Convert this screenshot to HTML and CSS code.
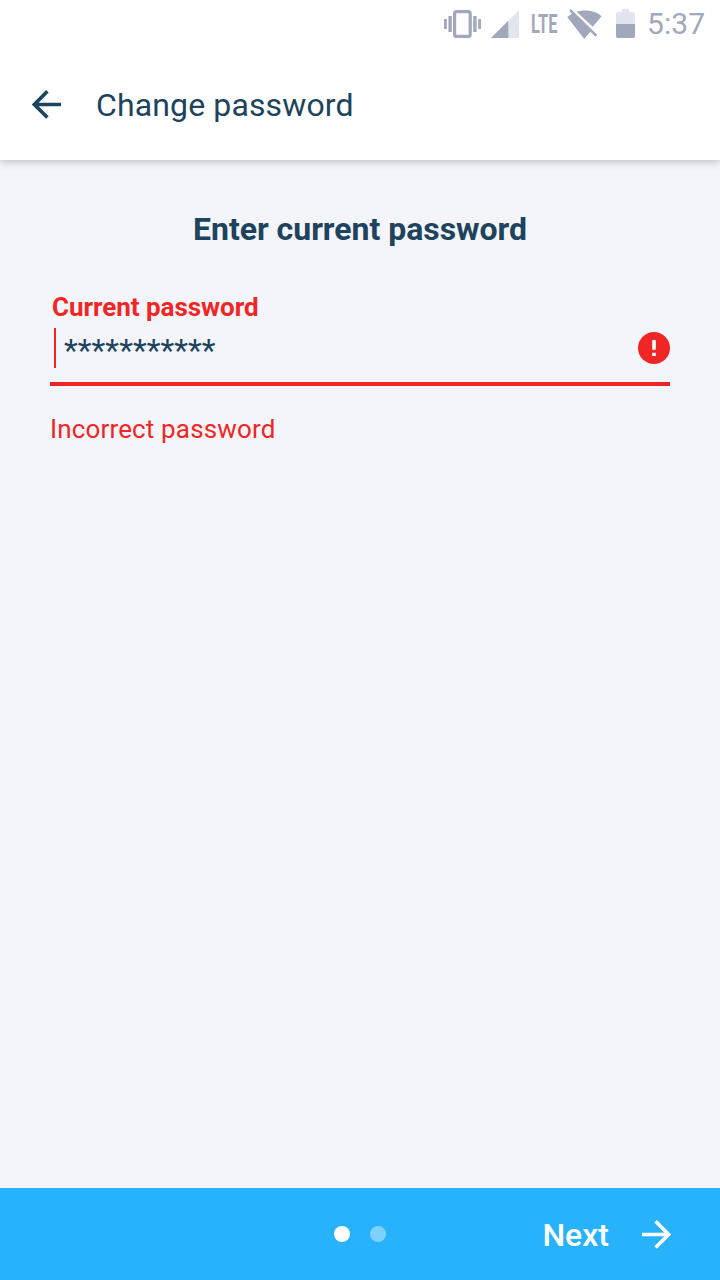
FILE: index.html
```html
<!DOCTYPE html>
<html lang="en">
<head>
<meta charset="utf-8">
<title>Change password</title>
<link rel="stylesheet" href="styles.css">
</head>
<body>
<div class="screen">
  <header class="header">
    <div class="status-bar">
      <svg class="vibrate" width="37" height="28" viewBox="0 0 37 28" fill="currentColor"><path d="M0 9h2.8v10H0zM4.4 6h3.4v16H4.4zM29.2 6h3.4v16h-3.4zM34.2 9H37v10h-2.8z"/><rect x="10.6" y="1.6" width="15.6" height="24.8" rx="2" fill="none" stroke="currentColor" stroke-width="3.2"/></svg>
      <svg class="signal" width="28" height="28" viewBox="0 0 28 28"><path class="faded" d="M28 0v28H0z"/><path fill="currentColor" d="M17.3 10.7V28H0z"/></svg>
      <span class="lte">LTE</span>
      <svg class="wifi" width="35" height="30" viewBox="0 0 35 30" fill="currentColor"><path d="M9.5 2.8C14 1.2 26.5-.2 34.5 7.2L25.8 17.8z"/><path d="M2.3 1.5L3.8 0 30.2 25.8l-1.7 1.9-5.2-5L17.2 30 .2 8.1 4.9 4.7z"/></svg>
      <svg class="battery" width="19" height="29" viewBox="0 0 19 29"><path class="faded" d="M6 0h7v3h4a2 2 0 0 1 2 2v10H0V5a2 2 0 0 1 2-2h4z"/><path fill="currentColor" d="M0 15h19v12a2 2 0 0 1-2 2H2a2 2 0 0 1-2-2z"/></svg>
      <span class="clock">5:37</span>
    </div>
    <div class="toolbar">
      <svg class="back" width="30" height="30" viewBox="0 0 30 30" fill="none" stroke="currentColor" stroke-width="3.6"><path d="M29 15.5H3M15.4 2.3L2.4 15.5l13 13.1"/></svg>
      <h1 class="title">Change password</h1>
    </div>
  </header>
  <main class="content">
    <h2 class="heading"><span>Enter current password</span></h2>
    <div class="label"><span>Current password</span></div>
    <div class="field">
      <span class="caret"></span>
      <span class="value">***********</span>
      <svg class="error-icon" width="32" height="32" viewBox="0 0 32 32"><circle cx="16" cy="16" r="16" fill="currentColor"/><path fill="#fff" d="M14.2 8h3.6v9.7h-3.6zM14.2 20.8h3.6V24h-3.6z"/></svg>
    </div>
    <div class="message"><span>Incorrect password</span></div>
  </main>
  <footer class="footer">
    <div class="dots"><span class="dot active"></span><span class="dot"></span></div>
    <div class="next"><span>Next</span>
      <svg width="30" height="30" viewBox="0 0 30 30" fill="none" stroke="currentColor" stroke-width="3.6"><path d="M1 15.5h26M14.6 2.3l13 13.2-13 13.1"/></svg>
    </div>
  </footer>
</div>
</body>
</html>
```
FILE: styles.css
```css
* { box-sizing: border-box; }
body { margin: 0; font-family: Roboto, "Liberation Sans", sans-serif; color: #1e435c; }
h1, h2 { margin: 0; }
svg { display: block; flex: none; }
.screen { width: 720px; height: 1280px; display: flex; flex-direction: column; background: #f3f5fa; }
.header { height: 160px; background: #fff; box-shadow: 0 2px 8px rgba(0, 0, 0, .22); }
.status-bar { height: 48px; display: flex; align-items: center; padding-left: 444px; color: #a2a8bc; }
.faded { fill: #e2e5ee; }
.signal { margin-left: 10px; }
.lte { width: 26px; margin-left: 12px; padding-top: 1px; font-size: 25px; line-height: 47px; font-weight: 700; white-space: nowrap; transform: scaleX(.66); transform-origin: left; }
.wifi { margin-left: 10px; }
.battery { margin: 0 0 2px 14px; }
.clock { margin-left: 12px; font-size: 30px; line-height: 48px; letter-spacing: .1px; }
.toolbar { height: 112px; display: flex; align-items: center; padding-left: 32px; }
.title { margin-left: 34px; padding-top: 2px; font-size: 32px; line-height: 40px; font-weight: 400; letter-spacing: .13px; }
.content { flex: 1; padding: 48px 50px 0; }
.heading { text-align: center; font-size: 32px; line-height: 42px; font-weight: 700; letter-spacing: -.02px; }
.label { margin-top: 40px; padding-left: 2px; font-size: 26px; line-height: 34px; font-weight: 700; letter-spacing: -.04px; color: #f02626; }
.field { height: 62px; display: flex; align-items: flex-start; padding: 4px 0 0 4px; border-bottom: 4px solid #f02626; color: #f02626; }
.caret { width: 2px; height: 40px; background: #f02626; }
.value { margin-left: 8px; padding-top: 2px; font-size: 32px; line-height: 40px; color: #1e435c; }
.error-icon { margin: 4px 0 0 auto; }
.message { margin-top: 26px; font-size: 26px; line-height: 34px; letter-spacing: .15px; color: #f02626; }
.footer { height: 92px; display: flex; align-items: center; justify-content: space-between; padding: 0 49px 0 334px; background: #29b2fc; color: #fff; }
.dots { display: flex; gap: 20px; }
.dot { width: 16px; height: 16px; border-radius: 50%; background: #7fd1fd; }
.dot.active { background: #fff; }
.next { display: flex; align-items: center; gap: 32px; font-size: 32px; line-height: 40px; font-weight: 500; }
.next span { padding-top: 2px; }
```
